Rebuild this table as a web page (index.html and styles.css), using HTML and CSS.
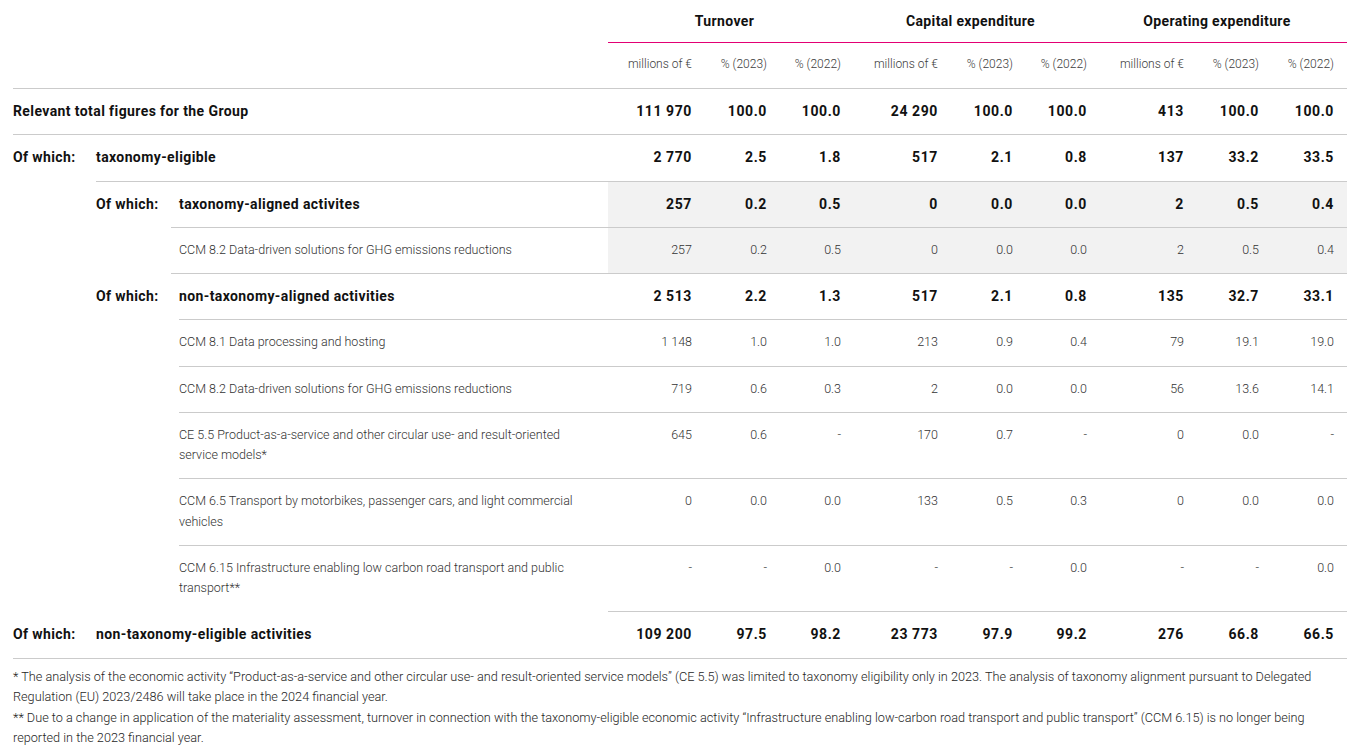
FILE: index.html
```html
<!DOCTYPE html>
<html lang="en">
<head>
<meta charset="utf-8">
<title>EU Taxonomy KPIs</title>
<link rel="stylesheet" href="styles.css">
</head>
<body>
<div class="report">
  <div class="row head-groups">
    <div class="label"></div>
    <div class="group">Turnover</div>
    <div class="group">Capital expenditure</div>
    <div class="group">Operating expenditure</div>
  </div>
  <div class="row head-units">
    <div class="label"></div>
    <div class="unit">millions of €</div><div class="unit">% (2023)</div><div class="unit">% (2022)</div>
    <div class="unit">millions of €</div><div class="unit">% (2023)</div><div class="unit">% (2022)</div>
    <div class="unit">millions of €</div><div class="unit">% (2023)</div><div class="unit">% (2022)</div>
  </div>

  <div class="row strong ls0">
    <div class="label"><span class="name">Relevant total figures for the Group</span></div>
    <div class="num">111 970</div><div class="num">100.0</div><div class="num">100.0</div>
    <div class="num">24 290</div><div class="num">100.0</div><div class="num">100.0</div>
    <div class="num">413</div><div class="num">100.0</div><div class="num">100.0</div>
  </div>

  <div class="row strong ls0">
    <div class="label"><span class="lead">Of which:</span><span class="name">taxonomy-eligible</span></div>
    <div class="num">2 770</div><div class="num">2.5</div><div class="num">1.8</div>
    <div class="num">517</div><div class="num">2.1</div><div class="num">0.8</div>
    <div class="num">137</div><div class="num">33.2</div><div class="num">33.5</div>
  </div>

  <div class="row strong shade ls1">
    <div class="label in1"><span class="lead">Of which:</span><span class="name">taxonomy-aligned activites</span></div>
    <div class="num">257</div><div class="num">0.2</div><div class="num">0.5</div>
    <div class="num">0</div><div class="num">0.0</div><div class="num">0.0</div>
    <div class="num">2</div><div class="num">0.5</div><div class="num">0.4</div>
  </div>

  <div class="row light shade ls2a">
    <div class="label in2"><span class="name">CCM 8.2 Data-driven solutions for GHG emissions reductions</span></div>
    <div class="num">257</div><div class="num">0.2</div><div class="num">0.5</div>
    <div class="num">0</div><div class="num">0.0</div><div class="num">0.0</div>
    <div class="num">2</div><div class="num">0.5</div><div class="num">0.4</div>
  </div>

  <div class="row strong ls2a">
    <div class="label in1"><span class="lead">Of which:</span><span class="name">non-taxonomy-aligned activities</span></div>
    <div class="num">2 513</div><div class="num">2.2</div><div class="num">1.3</div>
    <div class="num">517</div><div class="num">2.1</div><div class="num">0.8</div>
    <div class="num">135</div><div class="num">32.7</div><div class="num">33.1</div>
  </div>

  <div class="row light ls2">
    <div class="label in2"><span class="name">CCM 8.1 Data processing and hosting</span></div>
    <div class="num">1 148</div><div class="num">1.0</div><div class="num">1.0</div>
    <div class="num">213</div><div class="num">0.9</div><div class="num">0.4</div>
    <div class="num">79</div><div class="num">19.1</div><div class="num">19.0</div>
  </div>

  <div class="row light ls2">
    <div class="label in2"><span class="name">CCM 8.2 Data-driven solutions for GHG emissions reductions</span></div>
    <div class="num">719</div><div class="num">0.6</div><div class="num">0.3</div>
    <div class="num">2</div><div class="num">0.0</div><div class="num">0.0</div>
    <div class="num">56</div><div class="num">13.6</div><div class="num">14.1</div>
  </div>

  <div class="row light ls2">
    <div class="label in2"><span class="name">CE 5.5 Product-as-a-service and other circular use- and result-oriented service models*</span></div>
    <div class="num">645</div><div class="num">0.6</div><div class="num">-</div>
    <div class="num">170</div><div class="num">0.7</div><div class="num">-</div>
    <div class="num">0</div><div class="num">0.0</div><div class="num">-</div>
  </div>

  <div class="row light ls2">
    <div class="label in2"><span class="name">CCM 6.5 Transport by motorbikes, passenger cars, and light commercial vehicles</span></div>
    <div class="num">0</div><div class="num">0.0</div><div class="num">0.0</div>
    <div class="num">133</div><div class="num">0.5</div><div class="num">0.3</div>
    <div class="num">0</div><div class="num">0.0</div><div class="num">0.0</div>
  </div>

  <div class="row light ls2">
    <div class="label in2"><span class="name">CCM 6.15 Infrastructure enabling low carbon road transport and public transport**</span></div>
    <div class="num">-</div><div class="num">-</div><div class="num">0.0</div>
    <div class="num">-</div><div class="num">-</div><div class="num">0.0</div>
    <div class="num">-</div><div class="num">-</div><div class="num">0.0</div>
  </div>

  <div class="row strong lsnone last">
    <div class="label"><span class="lead">Of which:</span><span class="name">non-taxonomy-eligible activities</span></div>
    <div class="num">109 200</div><div class="num">97.5</div><div class="num">98.2</div>
    <div class="num">23 773</div><div class="num">97.9</div><div class="num">99.2</div>
    <div class="num">276</div><div class="num">66.8</div><div class="num">66.5</div>
  </div>

  <div class="notes">
    <p>* The analysis of the economic activity “Product-as-a-service and other circular use- and result-oriented service models” (CE 5.5) was limited to taxonomy eligibility only in 2023. The analysis of taxonomy alignment pursuant to Delegated Regulation (EU) 2023/2486 will take place in the 2024 financial year.</p>
    <p>** Due to a change in application of the materiality assessment, turnover in connection with the taxonomy-eligible economic activity “Infrastructure enabling low-carbon road transport and public transport” (CCM 6.15) is no longer being reported in the 2023 financial year.</p>
  </div>
</div>
</body>
</html>
```

FILE: styles.css
```css
html, body {
  margin: 0;
  padding: 0;
  background: #ffffff;
}

body {
  font-family: Roboto, "Liberation Sans", sans-serif;
  color: #1a1a1a;
}

.report {
  padding: 0 13px;
}

.row {
  display: grid;
  grid-template-columns: 595px 97px 75px 74px 97px 75px 74px 97px 75px 75px;
}

/* header: group titles */
.head-groups .label {
  border-bottom: 1px solid transparent;
}
.group {
  grid-column: span 3;
  text-align: center;
  font-weight: 700;
  font-size: 14px;
  letter-spacing: 0.35px;
  line-height: 20px;
  padding: 11px 13px 11px 0;
  border-bottom: 1px solid #e20074;
  color: #111;
}

/* header: units */
.unit {
  text-align: right;
  padding: 11px 13px 14px 0;
  font-size: 12px;
  font-weight: 300;
  line-height: 20px;
  color: #3c3c3c;
}

/* body rows */
.label {
  display: flex;
  align-items: flex-start;
  padding: 12px 24px 13px 0;
  border-top: 1px solid transparent;
  line-height: 20.25px;
  background-image: linear-gradient(#cbcbcb, #cbcbcb);
  background-repeat: no-repeat;
  background-origin: border-box;
  background-position: right top;
  background-size: calc(100% - var(--ls, 0px)) 1px;
}

.head-groups .label,
.head-units .label {
  background: none;
  border-top: 0;
  padding: 0;
}

.ls0 { --ls: 0px; }
.ls1 { --ls: 83px; }
.ls2a { --ls: 158px; }
.ls2 { --ls: 166px; }
.lsnone .label { background: none; }

.in1 { padding-left: 83px; }
.in2 { padding-left: 166px; }

.lead {
  flex: none;
  width: 83px;
}
.name {
  flex: 1;
}

.num {
  text-align: right;
  padding: 12px 13px 13px 0;
  border-top: 1px solid #cbcbcb;
  line-height: 20.25px;
  white-space: nowrap;
}

.strong .label,
.strong .num {
  font-weight: 700;
  color: #111;
}
.strong .label {
  font-size: 14px;
  letter-spacing: 0.4px;
}
.strong .num {
  font-size: 14px;
  letter-spacing: 0.6px;
}

.light .label,
.light .num {
  font-weight: 300;
  font-size: 12.5px;
  color: #333;
}

.shade .num {
  background: #f2f2f2;
}

.last .label,
.last .num {
  border-bottom: 1px solid #cbcbcb;
}

/* footnotes */
.notes {
  padding-top: 8px;
  font-size: 12.7px;
  font-weight: 300;
  line-height: 20.5px;
  color: #262626;
}
.notes p {
  margin: 0;
}
```
